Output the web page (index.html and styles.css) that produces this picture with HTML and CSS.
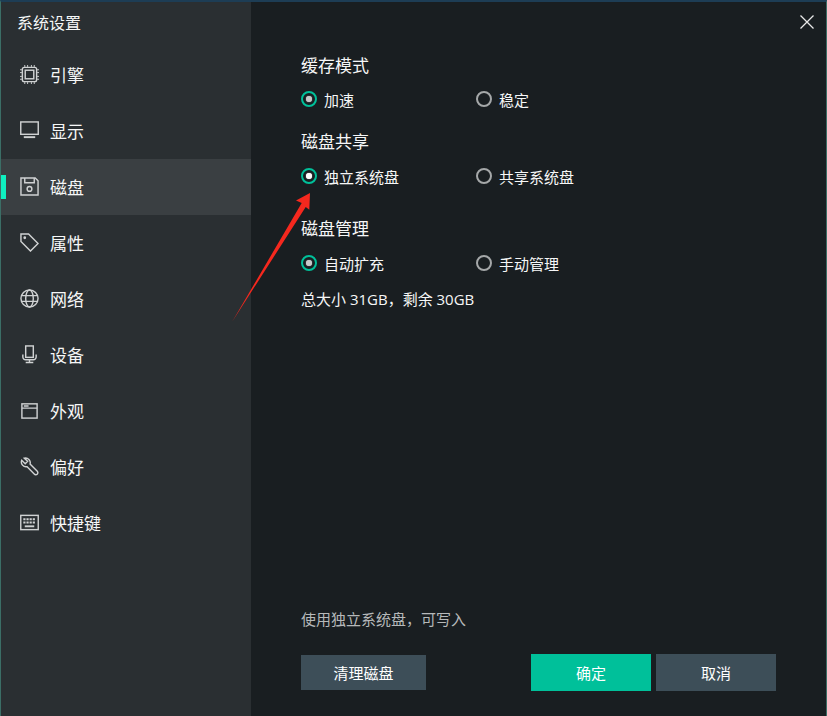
FILE: index.html
```html
<!DOCTYPE html>
<html lang="zh-CN">
<head>
<meta charset="utf-8">
<title>系统设置</title>
<link rel="stylesheet" href="styles.css">
</head>
<body>
<div class="window">
  <aside class="sidebar">
    <div class="title">系统设置</div>
    <nav class="menu">
      <a class="item"><svg class="ico" viewBox="0 0 20 20"><rect x="2.500" y="2.500" width="15" height="15" rx="2"/><rect x="5.500" y="5.500" width="9" height="9"/><path class="thin" d="M5 0v2M8 0v2M12 0v2M15 0v2M5 18v2M8 18v2M12 18v2M15 18v2M0 5h2M0 8h2M0 12h2M0 15h2M18 5h2M18 8h2M18 12h2M18 15h2"/></svg><span>引擎</span></a>
      <a class="item"><svg class="ico" viewBox="0 0 20 20"><rect x="0.800" y="1" width="18.400" height="13"/><path class="thick" d="M4 17h12"/></svg><span>显示</span></a>
      <a class="item active"><svg class="ico" viewBox="0 0 20 20"><path d="M1 1h15l3 3v15H1z"/><path d="M5 1v5h10V1"/><circle cx="10" cy="12.500" r="2.500"/></svg><span>磁盘</span></a>
      <a class="item"><svg class="ico" viewBox="0 0 20 20"><path d="M1 1h8l10 10-8 8L1 9z"/><circle cx="5" cy="5" r="0.700"/></svg><span>属性</span></a>
      <a class="item"><svg class="ico" viewBox="0 0 20 20"><circle cx="10" cy="10" r="9"/><ellipse cx="10" cy="10" rx="4" ry="9"/><path d="M1.500 7h17M1.500 13h17"/></svg><span>网络</span></a>
      <a class="item"><svg class="ico" viewBox="0 0 20 20"><rect x="6" y="1" width="8" height="12"/><path d="M3 10v2.500a3 3 0 0 0 3 3h8a3 3 0 0 0 3-3V10M10 15.500V18.500M6 18.500h8"/></svg><span>设备</span></a>
      <a class="item"><svg class="ico" viewBox="0 0 20 20"><rect x="2" y="3" width="16" height="15"/><path d="M2 7.500h16M4 5.200h5"/></svg><span>外观</span></a>
      <a class="item"><svg class="ico" viewBox="0 0 20 20"><path d="M4.500 1.200L8 4.500 5.500 7 1.800 3.500A5 5 0 0 0 7.500 10.200L15 18A2 2 0 0 0 18.200 15L10.600 7.400A5 5 0 0 0 4.500 1.200Z"/></svg><span>偏好</span></a>
      <a class="item"><svg class="ico" viewBox="0 0 20 20"><rect x="0.800" y="2.500" width="18.400" height="15"/><path class="thick" d="M3.500 6.500h13M3.500 10h13" stroke-dasharray="2.300 1"/><path class="thick" d="M5 14h10"/></svg><span>快捷键</span></a>
    </nav>
  </aside>
  <main class="main">
    <button class="close" aria-label="关闭"><svg viewBox="0 0 14 14"><path d="M0.500 0.500l13 13M13.500 0.500l-13 13"/></svg></button>
    <section class="group first">
      <h2>缓存模式</h2>
      <div class="row">
        <label class="radio"><i class="dot on"></i>加速</label>
        <label class="radio"><i class="dot"></i>稳定</label>
      </div>
    </section>
    <section class="group second">
      <h2>磁盘共享</h2>
      <div class="row">
        <label class="radio"><i class="dot on bright"></i>独立系统盘</label>
        <label class="radio"><i class="dot"></i>共享系统盘</label>
      </div>
    </section>
    <section class="group third">
      <h2>磁盘管理</h2>
      <div class="row">
        <label class="radio"><i class="dot on"></i>自动扩充</label>
        <label class="radio"><i class="dot"></i>手动管理</label>
      </div>
      <p class="size">总大小 31GB，剩余 30GB</p>
    </section>
    <p class="hint">使用独立系统盘，可写入</p>
    <footer class="actions">
      <button class="btn clean">清理磁盘</button>
      <div class="right">
        <button class="btn ok">确定</button>
        <button class="btn cancel">取消</button>
      </div>
    </footer>
  </main>
  <svg class="arrow" viewBox="0 0 90 140"><polygon points="0,132 69.700,13 64,10.500 78,3 77.300,19.700 73.700,17" fill="#f5281e"/></svg>
</div>
</body>
</html>
```
FILE: styles.css
```css
* { box-sizing: border-box; }
html, body { margin: 0; padding: 0; }
body {
  width: 827px;
  height: 716px;
  overflow: hidden;
  background: #191e21;
  font-family: "Noto Sans CJK SC", "Liberation Sans", sans-serif;
  color: #f6f7f7;
}
.window {
  position: relative;
  display: flex;
  width: 827px;
  height: 716px;
  border-top: 2px solid #1d3d55;
  border-left: 1px solid #3b6e66;
  border-right: 1px solid #3b6e66;
}
.sidebar {
  width: 250px;
  flex: none;
  background: #2a2f32;
}
.title {
  height: 45px;
  padding: 8px 0 0 16px;
  font-size: 16px;
  line-height: 24px;
}
.menu { display: flex; flex-direction: column; }
.item {
  display: flex;
  align-items: center;
  height: 56px;
  padding-left: 19px;
  font-size: 17px;
}
.item span { margin-left: 11px; padding-bottom: 2px; }
.item.active {
  position: relative;
  background: #3a3f42;
}
.item.active::before {
  content: "";
  position: absolute;
  left: 0;
  top: 16px;
  width: 5px;
  height: 24px;
  background: #0ff0c0;
}
.ico {
  width: 19px;
  height: 19px;
  margin-bottom: 1px;
  fill: none;
  stroke: #d0d2d3;
  stroke-width: 1.500;
  flex: none;
}
.ico .thin { stroke-width: 1; }
.ico .thick { stroke-width: 2; }
.main {
  position: relative;
  flex: 1;
  display: flex;
  flex-direction: column;
  padding-left: 50px;
  padding-right: 50px;
}
.close {
  position: absolute;
  top: 13px;
  right: 12px;
  width: 14px;
  height: 14px;
  padding: 0;
  border: 0;
  background: none;
}
.close svg { display: block; width: 14px; height: 14px; fill: none; stroke: #e8e8e8; stroke-width: 1.300; }
h2 {
  margin: 0;
  font-size: 17px;
  font-weight: 400;
  line-height: 26px;
}
.group.first { margin-top: 50px; }
.group.second { margin-top: 17px; }
.group.third { margin-top: 27px; }
.row {
  display: flex;
  margin-top: 10px;
  height: 24px;
  align-items: center;
}
.first .row { margin-top: 9px; }
.radio {
  display: flex;
  align-items: center;
  width: 175px;
  font-size: 15px;
}
.dot {
  position: relative;
  width: 16px;
  height: 16px;
  margin-right: 7px;
  border: 2px solid #a5a8a9;
  border-radius: 50%;
  flex: none;
}
.dot.on { border-color: #00c09a; }
.dot.on::after {
  content: "";
  position: absolute;
  left: 3px;
  top: 3px;
  width: 6px;
  height: 6px;
  border-radius: 50%;
  background: #c8cacb;
  box-shadow: 0 0 1px #c8cacb;
}
.dot.bright::after { background: #fff; box-shadow: 0 0 1px #fff; }
.size {
  margin: 13px 0 0;
  font-family: "Open Sans", "Noto Sans CJK SC", sans-serif;
  font-size: 15px;
  line-height: 22px;
}
.hint {
  margin: auto 0 0;
  font-size: 15px;
  line-height: 22px;
  color: #b6b9ba;
}
.actions {
  display: flex;
  justify-content: space-between;
  align-items: center;
  margin-top: 24px;
  margin-bottom: 25px;
}
.right { display: flex; gap: 5px; }
.btn {
  border: 0;
  padding: 0;
  font: inherit;
  font-size: 15px;
  color: #fff;
  background: #3d4e58;
}
.clean { width: 125px; height: 35px; }
.ok, .cancel { width: 120px; height: 37px; }
.ok { background: #00c09a; }
.arrow {
  position: absolute;
  left: 231px;
  top: 188px;
  width: 90px;
  height: 140px;
}
```
